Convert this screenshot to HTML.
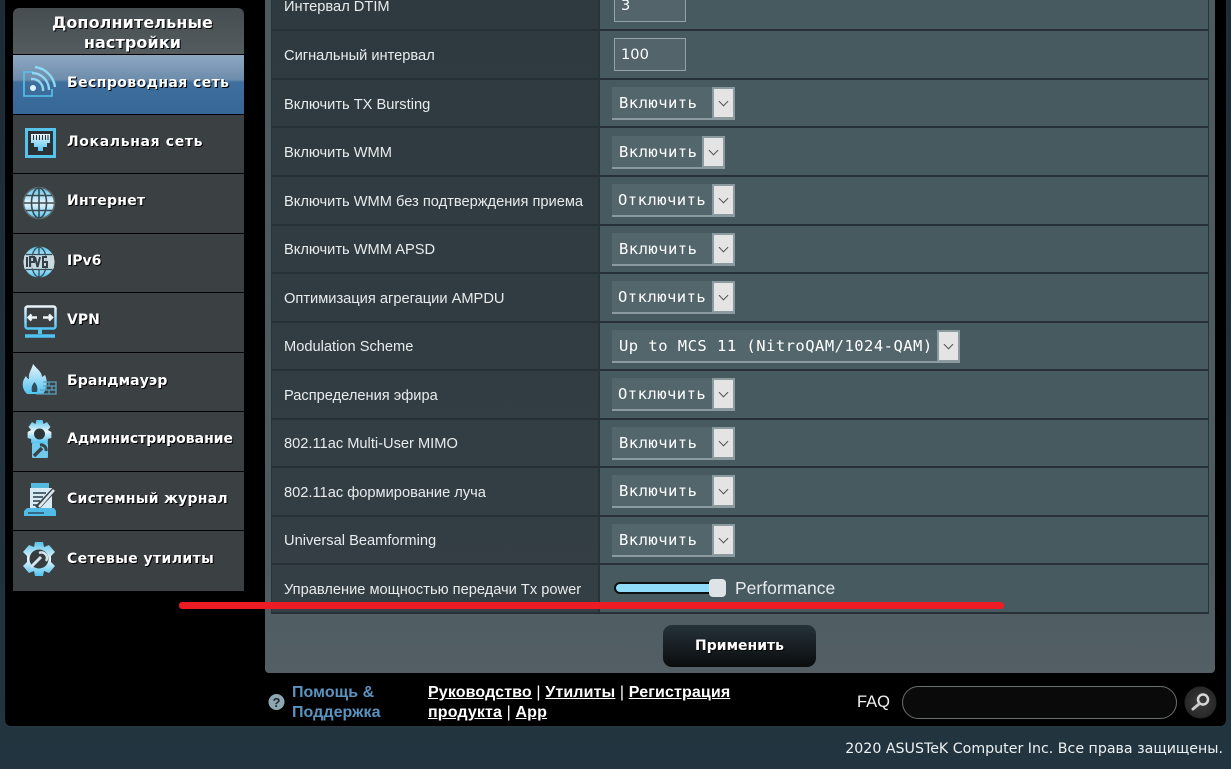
<!DOCTYPE html>
<html lang="ru"><head><meta charset="utf-8"><title>ASUS</title>
<style>
html,body{margin:0;padding:0;width:1231px;height:769px;overflow:hidden;background:#21333f;}
*{box-sizing:border-box}
body{position:relative;font-family:"Liberation Sans",sans-serif;color:#fff}
.a{position:absolute}
#bg{left:0;top:0;width:1231px;height:769px;background:linear-gradient(#1c2b35,#22343f)}
#wrap{left:5px;top:-10px;width:1221px;height:736px;background:#000;border-radius:0 0 6px 6px;box-shadow:0 1px 2px #2a3a44}
#title{left:13px;top:8px;width:231px;height:46px;border-radius:6px 6px 0 0;background:linear-gradient(#454d50,#545c5f);text-align:center;font:bold 16px/20px "DejaVu Sans",sans-serif;padding:5px 0 0 8px;text-shadow:1px 1px 0 #000;letter-spacing:.1px}
.it{left:13px;width:231px;background:#3b4043;font:bold 14px/16px "DejaVu Sans",sans-serif;text-shadow:1px 1px 0 #000;padding-left:54px;white-space:nowrap}
.it.on{background:linear-gradient(#8ea8c2 0,#6d8cab 42%,#3f6f9d 46%,#356797 100%)}
.it svg{position:absolute;left:9px;top:10px}
#panel{left:265px;top:-10px;width:950px;height:683px;background:linear-gradient(#4b5a60,#4d5b61 85%,#535f65);border-radius:0 0 4px 4px}
#tbl{left:271px;top:-10px;width:938px;height:623px;background:#475a60;border:1px solid #2a3338;border-top:0}
.lc{left:272px;width:327px;background:linear-gradient(#2e3a40,#343f45)}
.l{left:284px;font-size:14.65px;line-height:16px;color:#e9eced;white-space:nowrap}
.hr{left:271px;width:938px;height:2px;background:#263036}
#vr{left:598px;top:-10px;width:2px;height:622px;background:#2a3338}
.inp{left:614px;width:72px;height:33px;border:1px solid #93a3a8;background:#53656b;color:#fff;font:14.6px/31px "DejaVu Sans",sans-serif;padding-left:6px}
.sel{left:612px;height:33px;background:#52666c;border-bottom:2px solid #8a9a9f;font:15.5px/33px "DejaVu Sans Mono",monospace;letter-spacing:.47px;color:#fff;padding-left:7px;white-space:nowrap}
.sel i{position:absolute;top:0;right:0;width:23px;height:32px;background:#e4e4e4;border:2px solid #8a9a9f}
.sel i:after{content:"";position:absolute;left:6px;top:9px;width:6px;height:6px;border-right:1px solid #555;border-bottom:1px solid #555;transform:rotate(45deg)}
#btn{left:663px;top:625px;width:153px;height:42px;border-radius:9px;background:linear-gradient(#26323a,#0a0c0e);text-align:center;font:bold 14px/42px "DejaVu Sans",sans-serif;text-shadow:1px 1px 0 #000}
#red{left:179px;top:602px;width:825px;height:7px;border-radius:3px;background:#ed1c24}
.lk{text-decoration:underline;color:#fff}
</style></head><body>
<div class="a" id="bg"></div>
<div class="a" id="wrap"></div>

<svg width="0" height="0" style="position:absolute"><defs>
<linearGradient id="g" x1="0" y1="0" x2="0" y2="1"><stop offset="0" stop-color="#55c3ec"/><stop offset=".5" stop-color="#eaf6fb"/><stop offset="1" stop-color="#4fc4f2"/></linearGradient>
<linearGradient id="g2" x1="0" y1="0" x2="0" y2="1"><stop offset="0" stop-color="#e9f3f7"/><stop offset="1" stop-color="#52c5f4"/></linearGradient>
</defs></svg>

<div class="a" id="title">Дополнительные<br>настройки</div>

<div class="a it on" style="top:55px;height:59px;padding-top:20px;letter-spacing:.42px"><svg width="36" height="36" viewBox="0 0 36 36" fill="none" stroke="#56c4ee" stroke-width="2"><path d="M11 7H2V31H30V24" stroke-width="1.6"/><circle cx="11" cy="23" r="3" fill="#dff3fb" stroke="none"/><path d="M9 14a11 11 0 0 1 12 12M10 8a17 17 0 0 1 17 17M13 2a23 23 0 0 1 20 20" stroke="#8fd8f3" stroke-width="2.4"/></svg>Беспроводная сеть</div>

<div class="a it" style="top:115px;height:58px;padding-top:19px;letter-spacing:.65px"><svg width="36" height="36" viewBox="0 0 36 36" style="top:12px"><rect x="3" y="1" width="31" height="30" fill="#55c3ec"/><rect x="6" y="4" width="25" height="24" fill="#2b3135"/><path d="M9 7H28V16H25V20H21V24H16V20H12V16H9Z" fill="url(#g2)"/><path d="M11.500 8v5M14.500 8v5M17.500 8v5M20.500 8v5M23.500 8v5M26 8v5" stroke="#2b3135"/></svg>Локальная сеть</div>

<div class="a it" style="top:174px;height:59px;padding-top:19px;letter-spacing:.25px"><svg width="36" height="36" viewBox="0 0 36 36" style="top:11px" fill="none"><circle cx="17" cy="18" r="15.500" fill="url(#g)" stroke="#5d6a70" stroke-width="1.5"/><g stroke="#3b4a52" stroke-width="1.600"><ellipse cx="17" cy="18" rx="7.500" ry="15"/><path d="M17 3V33M2 18H32M4 10.500H30M4 25.500H30"/></g></svg>Интернет</div>

<div class="a it" style="top:234px;height:58px;padding-top:19px"><svg width="36" height="36" viewBox="0 0 36 36" style="top:10px" fill="none"><circle cx="17" cy="18" r="15.500" fill="url(#g)"/><g stroke="#3b4a52" stroke-width="1.300"><ellipse cx="17" cy="18" rx="7.500" ry="15"/><path d="M17 3V11M17 25V33M4 10.500H30M4 25.500H30"/></g><rect x="2" y="11.500" width="30" height="13" fill="#c9d6dc" opacity=".85"/><path d="M5 13v10M8 23V13h4v5H8M13 13l2.500 10L18 13M25 13h-4v10h4v-5h-4" stroke="#33404a" stroke-width="2"/></svg>IPv6</div>

<div class="a it" style="top:293px;height:59px;padding-top:19px"><svg width="36" height="36" viewBox="0 0 36 36" style="top:12px" fill="none"><rect x="3.500" y="1.500" width="30" height="22" rx="2" stroke="url(#g2)" stroke-width="2.500"/><path d="M7 12.500H15M9.500 9.500L6.500 12.500L9.500 15.500M21 12.500H30M27 9.500L30 12.500L27 15.500" stroke="#eef6f9" stroke-width="2.400"/><path d="M18 24V29" stroke="#55c3ec" stroke-width="4"/><path d="M3 31H33" stroke="#4fc4f2" stroke-width="3.500"/></svg>VPN</div>

<div class="a it" style="top:353px;height:58px;padding-top:20px;letter-spacing:.1px"><svg width="36" height="36" viewBox="0 0 36 36" style="top:9px" fill="none"><path d="M11 2C15 7 20 10 20 15L23 13C26 19 25 27 21 32H5C0 27-1 20 4 14C5 16 6 17 7 17C6 11 10 7 11 2Z" fill="url(#g2)"/><path d="M12.500 20C15 23 16 26 15 30H10C9 26 10 23 12.500 20Z" fill="#2f4e5e"/><path d="M21 20H34V32H14M21 24H34M18 28H34M27 20V24M24 24V28M30 24V28M27 28V32" stroke="#5b9fbc" stroke-width="1.300"/></svg>Брандмауэр</div>

<div class="a it" style="top:412px;height:59px;padding-top:19px"><svg width="36" height="40" viewBox="0 0 36 40" style="top:7px" fill="none"><g transform="translate(17.5 0) scale(.88 1) translate(-17.5 0)"><path d="M14 1H21L22 5L26 3L30 8L27 11L31 13V19L27 20L27 24H8L8 20L4 19V13L8 11L5 8L9 3L13 5Z" fill="url(#g)"/></g><circle cx="17.500" cy="15" r="5.500" fill="#2f363a"/><rect x="10" y="24" width="16" height="15" rx="1" fill="#6ecbee"/><path d="M12 37L20 29" stroke="#3a4348" stroke-width="3.500"/><path d="M18 26a5 5 0 0 1 6 6" stroke="#3a4348" stroke-width="3"/></svg>Администрирование</div>

<div class="a it" style="top:472px;height:58px;padding-top:19px;letter-spacing:.25px"><svg width="36" height="36" viewBox="0 0 36 36" style="top:10px" fill="none"><rect x="9" y="1" width="18" height="5" fill="#56b9e0"/><rect x="8" y="6" width="22" height="21" fill="#d8eaf2"/><path d="M11 11H24M11 15H21M11 19H18M11 23H17" stroke="#3f5663" stroke-width="1.800"/><path d="M15 26L33 7" stroke="#3b4043" stroke-width="5"/><path d="M17 25L32 8" stroke="#dcebf1" stroke-width="2.500"/><path d="M2 34V29L5 26H32L34 29V34Z" fill="#4fbbe6"/><path d="M6 31H22" stroke="#2f4e5e" stroke-width="1.500"/></svg>Системный журнал</div>

<div class="a it" style="top:531px;height:60px;padding-top:20px;letter-spacing:.4px"><svg width="36" height="36" viewBox="0 0 36 36" style="top:10px" fill="none"><path d="M13 1H21L22 6L27 4L33 11L29 15V21L33 25L27 32L22 30L21 35H13L12 30L7 32L1 25L5 21V15L1 11L7 4L12 6Z" fill="url(#g)"/><circle cx="17" cy="18" r="9.500" fill="#363d41"/><path d="M9 26L19 16" stroke="#d3e6ee" stroke-width="3"/><path d="M17 12a5.500 5.500 0 0 1 7 8" stroke="#d3e6ee" stroke-width="2.500"/></svg>Сетевые утилиты</div>

<div class="a" id="panel"></div>
<div class="a" id="tbl"></div>
<div class="a lc" style="top:0;height:612px"></div>
<div class="a" id="vr"></div>
<div class="a hr" style="top:29px"></div>
<div class="a hr" style="top:78px"></div>
<div class="a hr" style="top:126px"></div>
<div class="a hr" style="top:175px"></div>
<div class="a hr" style="top:224px"></div>
<div class="a hr" style="top:272px"></div>
<div class="a hr" style="top:321px"></div>
<div class="a hr" style="top:369px"></div>
<div class="a hr" style="top:418px"></div>
<div class="a hr" style="top:466px"></div>
<div class="a hr" style="top:515px"></div>
<div class="a hr" style="top:563px"></div>
<div class="a hr" style="top:612px"></div>

<div class="a l" style="top:-1px">Интервал DTIM</div>
<div class="a l" style="top:48px">Сигнальный интервал</div>
<div class="a l" style="top:97px">Включить TX Bursting</div>
<div class="a l" style="top:145px">Включить WMM</div>
<div class="a l" style="top:194px">Включить WMM без подтверждения приема</div>
<div class="a l" style="top:242px">Включить WMM APSD</div>
<div class="a l" style="top:291px">Оптимизация агрегации AMPDU</div>
<div class="a l" style="top:339px">Modulation Scheme</div>
<div class="a l" style="top:388px">Распределения эфира</div>
<div class="a l" style="top:436px">802.11ac Multi-User MIMO</div>
<div class="a l" style="top:485px">802.11ac формирование луча</div>
<div class="a l" style="top:533px">Universal Beamforming</div>
<div class="a l" style="top:582px">Управление мощностью передачи Tx power</div>

<div class="a inp" style="top:-11px">3</div>
<div class="a inp" style="top:38px">100</div>
<div class="a sel" style="top:87px;width:123px">Включить<i></i></div>
<div class="a sel" style="top:136px;width:113px">Включить<i></i></div>
<div class="a sel" style="top:184px;width:123px;padding-left:6px">Отключить<i></i></div>
<div class="a sel" style="top:233px;width:123px">Включить<i></i></div>
<div class="a sel" style="top:281px;width:123px;padding-left:6px">Отключить<i></i></div>
<div class="a sel" style="top:330px;width:348px">Up to MCS 11 (NitroQAM/1024-QAM)<i></i></div>
<div class="a sel" style="top:378px;width:123px;padding-left:6px">Отключить<i></i></div>
<div class="a sel" style="top:427px;width:123px">Включить<i></i></div>
<div class="a sel" style="top:475px;width:123px">Включить<i></i></div>
<div class="a sel" style="top:524px;width:123px">Включить<i></i></div>

<div class="a" style="left:614px;top:582px;width:106px;height:12px;border-radius:6px;background:#8fdcfb;border:2px solid #0c1114"></div>
<div class="a" style="left:709px;top:579px;width:17px;height:18px;border-radius:4px;background:#dde3e6"></div>
<div class="a" style="left:735px;top:578px;font-size:17.5px;line-height:20px;color:#e6eaec">Performance</div>

<div class="a" id="red"></div>
<div class="a" id="btn">Применить</div>

<svg class="a" style="left:268px;top:693px" width="18" height="18" viewBox="0 0 18 18"><circle cx="8.500" cy="9" r="8" fill="#8ea8b2"/><text x="8.500" y="14" text-anchor="middle" font-family="Liberation Sans" font-weight="bold" font-size="13" fill="#20282c">?</text></svg>
<div class="a" style="left:292px;top:683px;font:bold 16px/20px 'Liberation Sans',sans-serif;letter-spacing:.05px;color:#5a93c0">Помощь &amp;<br>Поддержка</div>
<div class="a" style="left:428px;top:683px;font:bold 16px/20px 'Liberation Sans',sans-serif;letter-spacing:.13px;white-space:nowrap"><span class="lk">Руководство</span> <span style="font-weight:400">|</span> <span class="lk">Утилиты</span> <span style="font-weight:400">|</span> <span class="lk">Регистрация</span><br><span class="lk">продукта</span> <span style="font-weight:400">|</span> <span class="lk">App</span></div>
<div class="a" style="left:857px;top:692px;font-size:16.5px;line-height:20px;color:#f0f0f0">FAQ</div>
<div class="a" style="left:902px;top:686px;width:275px;height:33px;border-radius:17px;border:1px solid #6a6f72;background:#0a0a0a"></div>
<svg class="a" style="left:1184px;top:686px" width="33" height="33" viewBox="0 0 33 33"><defs><radialGradient id="sb" cx=".5" cy=".5" r=".6"><stop offset="0" stop-color="#3c3c3c"/><stop offset="1" stop-color="#232323"/></radialGradient></defs><circle cx="16.500" cy="16.500" r="16" fill="url(#sb)"/><circle cx="19" cy="13.500" r="5" fill="none" stroke="#d8d8d8" stroke-width="2.500"/><path d="M15 18L9 23" stroke="#c8c8c8" stroke-width="3" stroke-linecap="round"/></svg>
<div class="a" style="right:8px;top:740px;font:14.2px/18px 'DejaVu Sans',sans-serif;color:#eef1f2;white-space:nowrap">2020 ASUSTeK Computer Inc. Все права защищены.</div>
</body></html>
